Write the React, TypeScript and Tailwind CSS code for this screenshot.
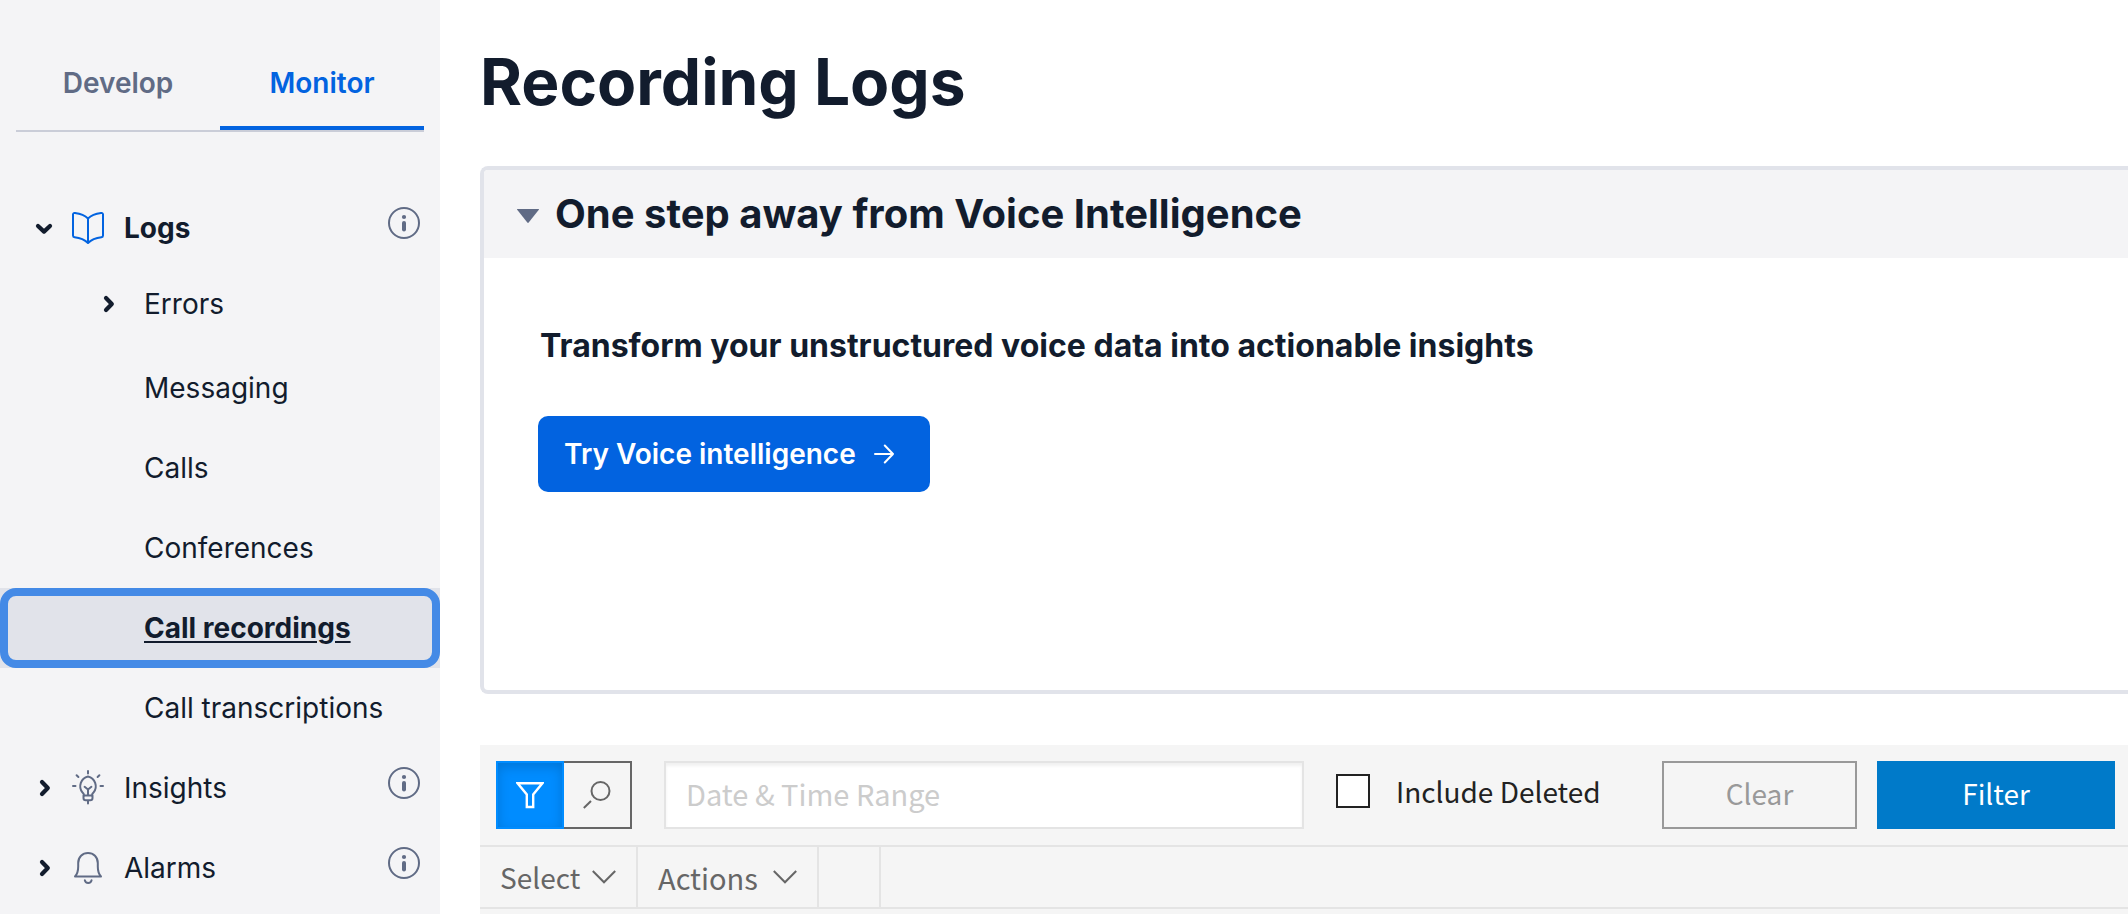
import { useState, type ReactNode } from "react";

function Chevron({ open = false }: { open?: boolean }) {
  return (
    <svg
      className="size-6 shrink-0 text-[#121c2d]"
      viewBox="0 0 24 24"
      fill="none"
      stroke="currentColor"
      strokeWidth="4.2"
      strokeLinecap="round"
      strokeLinejoin="round"
      aria-hidden="true"
    >
      <path d={open ? "M6 10l6 5.600 6-5.600" : "M10 6l5.800 6-5.800 6"} />
    </svg>
  );
}

function BookIcon() {
  return (
    <svg className="size-8 shrink-0" viewBox="0 0 32 32" fill="none" stroke="#0263e0" strokeWidth="2" strokeLinejoin="round" aria-hidden="true">
      <path d="M16 6.5C13 3.5 8 1.6 3 1 1.800.9 1 1.400 1 2.600V23.500c0 1 .6 1.600 1.600 1.700C8 25.800 13 28 16 31c3-3 8-5.200 13.400-5.800 1-.1 1.600-.7 1.600-1.700V2.600c0-1.200-.8-1.700-2-1.600C24 1.600 19 3.500 16 6.500Z" />
      <path d="M16 6.500V31" />
    </svg>
  );
}

function BulbIcon() {
  return (
    <svg className="h-9 w-8 shrink-0" viewBox="0 0 32 36" fill="none" stroke="#606b85" strokeWidth="2" strokeLinecap="round" strokeLinejoin="round" aria-hidden="true">
      <path d="M12 25.500c0-1.600-.6-2.400-1.600-3.100A10 10 0 0 1 16 6.500a10 10 0 0 1 5.600 15.900c-1 .7-1.600 1.500-1.600 3.100" />
      <path d="M11.500 25.500h9v2.500c0 1.400-.8 2.200-2.200 2.200h-4.600c-1.400 0-2.200-.8-2.200-2.200ZM16 30.500v3M16 25v-5.500M12.600 16.800l3.400 2.700 3.400-2.700" />
      <path d="M16 1v2.500M1 16h2.500M28.500 16H31M4.600 5.200l1.800 1.800M27.400 5.200 25.600 7" />
    </svg>
  );
}

function BellIcon() {
  return (
    <svg className="size-8 shrink-0" viewBox="0 0 32 32" fill="none" stroke="#606b85" strokeWidth="2" strokeLinecap="round" strokeLinejoin="round" aria-hidden="true">
      <path d="M3 24.500c2.400-2.500 3.200-5.500 3.200-10V11C6.200 5 10.500 1 16 1s9.800 4 9.800 10v3.500c0 4.500.8 7.500 3.200 10Z" />
      <path d="M12.800 28.200c.3 1.700 1.500 2.800 3.400 2.800s3.100-1.100 3.400-2.800" />
    </svg>
  );
}

function InfoButton({ about }: { about: string }) {
  return (
    <button type="button" aria-label={`About ${about}`} className="mb-[10px]">
      <svg className="size-8" viewBox="0 0 32 32" fill="none" aria-hidden="true">
        <circle cx="16" cy="16" r="15" stroke="#606b85" strokeWidth="2" />
        <circle cx="16" cy="10" r="2.100" fill="#606b85" />
        <path d="M16 16v6.500" stroke="#606b85" strokeWidth="4" strokeLinecap="round" />
      </svg>
    </button>
  );
}

function Section({ label, icon, open, onToggle }: { label: string; icon: ReactNode; open: boolean; onToggle: () => void }) {
  return (
    <div className="flex h-20 items-center justify-between pr-5 pl-8">
      <button type="button" aria-expanded={open} onClick={onToggle} className="flex items-center">
        <Chevron open={open} />
        <span className="ml-4 flex">{icon}</span>
        <span className={open ? "ml-5 font-bold" : "ml-5"}>{label}</span>
      </button>
      <InfoButton about={label} />
    </div>
  );
}

const logLinks = ["Messaging", "Calls", "Conferences", "Call recordings", "Call transcriptions"];

function Sidebar() {
  const [logsOpen, setLogsOpen] = useState(true);
  return (
    <aside className="w-[440px] shrink-0 bg-[#f4f4f6] text-[28px] leading-10 text-[#121c2d]">
      <div role="tablist" className="mx-4 flex border-b-2 border-[#cacdd8] pt-10 font-semibold">
        <button role="tab" aria-selected="false" className="h-[90px] flex-1 border-b-4 border-transparent text-[#606b85]">
          Develop
        </button>
        <button role="tab" aria-selected="true" className="h-[90px] flex-1 border-b-4 border-[#0263e0] text-[#0263e0]">
          Monitor
        </button>
      </div>
      <nav className="mt-14">
        <Section label="Logs" icon={<BookIcon />} open={logsOpen} onToggle={() => setLogsOpen(!logsOpen)} />
        {logsOpen && (
          <ul>
            <li className="mb-2 flex h-18 items-center pl-24">
              <button type="button" aria-expanded="false" className="flex items-center">
                <Chevron />
                <span className="ml-6">Errors</span>
              </button>
            </li>
            {logLinks.map((label) =>
              label === "Call recordings" ? (
                <li key={label} className="bg-[#e1e3ea]">
                  <a href="#recordings" aria-current="page" className="flex h-20 items-center rounded-2xl border-8 border-[#448ae6] pl-34 font-bold underline decoration-2 underline-offset-3">
                    {label}
                  </a>
                </li>
              ) : (
                <li key={label}>
                  <a href="#logs" className="flex h-20 items-center pl-36">
                    {label}
                  </a>
                </li>
              ),
            )}
          </ul>
        )}
        <Section label="Insights" icon={<BulbIcon />} open={false} onToggle={() => {}} />
        <Section label="Alarms" icon={<BellIcon />} open={false} onToggle={() => {}} />
      </nav>
    </aside>
  );
}

function MenuChevron() {
  return (
    <svg className="h-[14px] w-6" viewBox="0 0 24 14" fill="none" stroke="currentColor" strokeWidth="2" aria-hidden="true">
      <path d="M.8 1 12 12.300 23.200 1" />
    </svg>
  );
}

function Toolbar() {
  return (
    <section className="mt-[51px] flex-1 bg-[#f5f5f5] font-['Noto_Sans_CJK_SC','Open_Sans',sans-serif] text-[28px] leading-10">
      <form className="flex items-center border-b-2 border-[#e4e4e4] py-4 pr-[13px] pl-4" onSubmit={(e) => e.preventDefault()}>
        <div className="flex">
          <button type="button" aria-label="Filter mode" aria-pressed="true" className="flex size-17 items-center justify-center border-2 border-[#008cff] bg-[#008cff] shadow-[inset_0_4px_12px_rgba(0,0,0,0.16)]">
            <svg className="h-7 w-7" viewBox="0 0 28 28" fill="none" stroke="#fff" strokeWidth="2.4" aria-hidden="true">
              <path d="M1.600 2.200h24.800L17.200 13.500V26h-6.400V13.500Z" />
            </svg>
          </button>
          <button type="button" aria-label="Search mode" className="flex size-17 items-center justify-center border-2 border-l-0 border-[#666] text-[#666]">
            <svg className="size-7" viewBox="0 0 28 28" fill="none" stroke="currentColor" strokeWidth="2" aria-hidden="true">
              <circle cx="17.500" cy="10" r="9" />
              <path d="M8 20 .8 27" />
            </svg>
          </button>
        </div>
        <input
          type="text"
          aria-label="Date and time range"
          placeholder="Date & Time Range"
          className="ml-8 h-17 max-w-[640px] min-w-0 flex-1 border-2 border-[#e4e4e4] bg-white px-5 pb-1 text-[29px] shadow-[inset_0_3px_3px_rgba(0,0,0,0.06)] outline-none placeholder:text-[#ccc]"
        />
        <label className="ml-8 flex items-center pb-2 whitespace-nowrap text-[#222]">
          <input type="checkbox" className="size-[34px] appearance-none border-2 border-[#222] bg-white" />
          <span className="ml-[26px]">Include Deleted</span>
        </label>
        <button type="button" className="ml-auto h-17 w-[195px] border-2 border-[#999] pb-1 text-[#999]">
          Clear
        </button>
        <button type="submit" className="ml-5 h-17 w-[238px] bg-[#007ac9] pb-1 text-white">
          Filter
        </button>
      </form>
      <div className="flex h-[62px] border-b-2 border-[#e4e4e4] text-[#666]">
        <button type="button" className="flex w-[158px] items-center justify-between border-r-2 border-[#e4e4e4] px-5">
          Select <MenuChevron />
        </button>
        <button type="button" className="flex w-[181px] items-center justify-between border-r-2 border-[#e4e4e4] px-5 text-[29px]">
          Actions <MenuChevron />
        </button>
        <div className="w-[62px] border-r-2 border-[#e4e4e4]" />
      </div>
    </section>
  );
}

export default function App() {
  const [open, setOpen] = useState(true);
  return (
    <div className="flex h-screen overflow-hidden bg-white font-[Inter,sans-serif] text-[#121c2d]">
      <Sidebar />
      <main className="flex min-w-0 flex-1 flex-col pl-10">
        <h1 className="pt-10 text-[64px] leading-[84px] font-bold">Recording Logs</h1>
        <section className="mt-[42px] overflow-hidden rounded-l-lg border-4 border-r-0 border-[#e1e3ea]">
          <h2>
            <button type="button" aria-expanded={open} onClick={() => setOpen(!open)} className="flex h-22 w-full items-center bg-[#f4f4f6] pt-1 pl-[33px] text-[40px] leading-[56px] font-bold">
              <svg className="h-[14px] w-[22px]" viewBox="0 0 22 14" fill="#606b85" aria-hidden="true">
                <path d="M.5 0h21c.5 0 .6.400.3.800L11.700 13.600c-.4.500-1 .5-1.400 0L.2.800C-.1.400 0 0 .5 0Z" />
              </svg>
              <span className="ml-4 pb-1">One step away from Voice Intelligence</span>
            </button>
          </h2>
          {open && (
            <div className="h-[432px] pt-16 pl-[54px]">
              <p className="pl-0.5 text-[32px] leading-12 font-bold">Transform your unstructured voice data into actionable insights</p>
              <button type="button" className="mt-[46px] flex h-[76px] items-center rounded-[10px] bg-[#0263e0] pr-7 pl-[26px] text-[28px] leading-10 font-semibold text-white">
                Try Voice intelligence
                <svg className="mr-2 ml-[18px] size-5" viewBox="0 0 20 20" fill="none" stroke="currentColor" strokeWidth="2" strokeLinecap="round" strokeLinejoin="round" aria-hidden="true">
                  <path d="M1 10h18M10.800 1.500 19 10l-8.200 8.500" />
                </svg>
              </button>
            </div>
          )}
        </section>
        <Toolbar />
      </main>
    </div>
  );
}
